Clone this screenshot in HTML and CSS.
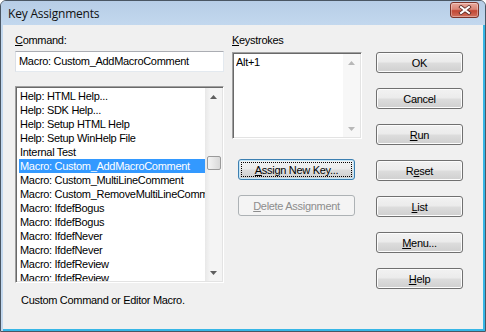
FILE: index.html
```html
<!DOCTYPE html>
<html lang="en">
<head>
    <meta charset="UTF-8">
    <title>Key Assignments</title>
    <link rel="stylesheet" href="styles.css">
</head>
<body>

    <div class="window">
        <div class="titlebar">
            <span class="title">Key Assignments</span>
            <button class="close-btn" aria-label="Close">
                <svg width="14" height="10" viewBox="0 0 14 10">
                    <path d="M3 2 L11 8 M11 2 L3 8" stroke="#5a2a24" stroke-width="3.6" stroke-linecap="square"/>
                    <path d="M3 2 L11 8 M11 2 L3 8" stroke="#fff" stroke-width="2" stroke-linecap="square"/>
                </svg>
            </button>
        </div>

        <div class="client">
            <div class="col col-cmd">
                <div class="lbl"><u>C</u>ommand:</div>
                <div class="edit">Macro: Custom_AddMacroComment</div>

                <div class="listbox cmd-list">
                    <ul class="items">
                        <li>Help: HTML Help...</li>
                        <li>Help: SDK Help...</li>
                        <li>Help: Setup HTML Help</li>
                        <li>Help: Setup WinHelp File</li>
                        <li>Internal Test</li>
                        <li class="selected">Macro: Custom_AddMacroComment</li>
                        <li>Macro: Custom_MultiLineComment</li>
                        <li>Macro: Custom_RemoveMultiLineComment</li>
                        <li>Macro: IfdefBogus</li>
                        <li>Macro: IfdefBogus</li>
                        <li>Macro: IfdefNever</li>
                        <li>Macro: IfdefNever</li>
                        <li>Macro: IfdefReview</li>
                        <li>Macro: IfdefReview</li>
                    </ul>
                    <div class="vscroll">
                        <div class="arrow"><svg width="7" height="4" viewBox="0 0 7 4"><path d="M0 4 L3.5 0 L7 4Z"/></svg></div>
                        <div class="track"><div class="thumb"></div></div>
                        <div class="arrow"><svg width="7" height="4" viewBox="0 0 7 4"><path d="M0 0 L3.5 4 L7 0Z"/></svg></div>
                    </div>
                </div>

                <p class="desc">Custom Command or Editor Macro.</p>
            </div>

            <div class="col col-keys">
                <div class="lbl"><u>K</u>eystrokes</div>
                <div class="listbox keys-list">
                    <ul class="items">
                        <li>Alt+1</li>
                    </ul>
                    <div class="vscroll disabled">
                        <div class="arrow"><svg width="7" height="4" viewBox="0 0 7 4"><path d="M0 4 L3.5 0 L7 4Z"/></svg></div>
                        <div class="track"></div>
                        <div class="arrow"><svg width="7" height="4" viewBox="0 0 7 4"><path d="M0 0 L3.5 4 L7 0Z"/></svg></div>
                    </div>
                </div>
                <button class="btn btn-wide btn-focus"><span class="focus-ring"><u>A</u>ssign New Key...</span></button>
                <button class="btn btn-wide" disabled><u>D</u>elete Assignment</button>
            </div>

            <div class="col col-btns">
                <button class="btn">OK</button>
                <button class="btn">Cancel</button>
                <button class="btn"><u>R</u>un</button>
                <button class="btn">R<u>e</u>set</button>
                <button class="btn"><u>L</u>ist</button>
                <button class="btn"><u>M</u>enu...</button>
                <button class="btn"><u>H</u>elp</button>
            </div>
        </div>
    </div>

</body>
</html>
```

FILE: styles.css
```css
:root {
    --face: #f0f0f0;
    --frame-dark: #4a5663;
    --frame-blue: #c3d8ee;
    --frame-cyan: #36b6e6;
    --select: #3399ff;
}

* {
    margin: 0;
    padding: 0;
    box-sizing: border-box;
}

body {
    width: 486px;
    height: 332px;
    overflow: hidden;
    background: #fff;
    font-family: "Liberation Sans", Arial, sans-serif;
    font-size: 11px;
    letter-spacing: -0.3px;
    color: #000;
}

u {
    text-decoration: underline;
    text-underline-offset: 1px;
}

.window {
    width: 486px;
    height: 332px;
    display: flex;
    flex-direction: column;
    border: 1px solid var(--frame-dark);
    border-top-left-radius: 6px;
    border-top-right-radius: 6px;
    background: var(--frame-blue);
    overflow: hidden;
}

/* title bar */
.titlebar {
    height: 24px;
    display: flex;
    align-items: center;
    padding: 1px 6px 0 7px;
    background: linear-gradient(#b7cde6, #c3d8ee);
}

.title {
    font-family: "Open Sans", "Noto Sans", sans-serif;
    font-size: 12px;
    letter-spacing: -0.2px;
    color: #111;
}

.close-btn {
    margin-left: auto;
    margin-top: -7px;
    width: 29px;
    height: 16px;
    display: flex;
    align-items: center;
    justify-content: center;
    border: 1px solid #7b3329;
    border-radius: 3px;
    background: linear-gradient(#e9a99d 0%, #d98576 45%, #c24734 55%, #d0705d 100%);
    box-shadow: inset 0 0 0 1px rgba(255, 255, 255, 0.35);
}

/* client area */
.client {
    flex: 1;
    display: flex;
    margin: 0 2px 2px 2px;
    padding: 9px 0 0 12px;
    background: var(--face);
    box-shadow: 2px 0 0 var(--frame-cyan), 0 2px 0 var(--frame-cyan), 2px 2px 0 var(--frame-cyan);
}

.col {
    display: flex;
    flex-direction: column;
}

.col-cmd {
    width: 209px;
}

.col-keys {
    width: 130px;
    margin-left: 8px;
}

.col-btns {
    width: 87px;
    margin-left: 14px;
    padding-top: 18px;
    gap: 15px;
}

.lbl {
    height: 13px;
    line-height: 13px;
}

/* edit */
.edit {
    margin-top: 4px;
    height: 21px;
    line-height: 19px;
    padding-left: 3px;
    background: #fff;
    border: 1px solid;
    border-color: #abadb3 #e3e9ef #e3e9ef #dbdfe6;
}

/* list boxes */
.listbox {
    display: flex;
    background: #fff;
    border: 1px solid;
    border-color: #a0a0a0 #fff #fff #a0a0a0;
    box-shadow: inset 1px 1px 0 #696969, inset -1px -1px 0 #e3e3e3;
    padding: 1px;
    overflow: hidden;
}

.cmd-list {
    margin-top: 14px;
    height: 197px;
}

.keys-list {
    margin-top: 5px;
    height: 87px;
}

.items {
    flex: 1;
    list-style: none;
    padding: 1px 0 0 2px;
    overflow: hidden;
}

.items li {
    height: 14px;
    line-height: 14px;
    padding-left: 1px;
    white-space: nowrap;
    overflow: hidden;
}

.items li.selected {
    background: var(--select);
    color: #fff;
}

.keys-list .items li {
    padding-left: 0;
}

/* scroll bar */
.vscroll {
    width: 17px;
    display: flex;
    flex-direction: column;
    background: linear-gradient(to right, #e8e8e8, #f4f4f4 30%, #f4f4f4);
}

.vscroll .arrow {
    height: 17px;
    display: flex;
    align-items: center;
    justify-content: center;
}

.vscroll .arrow svg {
    fill: #5e5e5e;
}

.vscroll.disabled {
    background: #f7f7f7;
}

.vscroll.disabled .arrow svg {
    fill: #b8b8b8;
}

.track {
    flex: 1;
}

.thumb {
    margin: 51px 1px 0 2px;
    height: 14px;
    border: 1px solid #9a9a9a;
    border-radius: 2px;
    background: linear-gradient(to right, #f4f4f4, #e6e6e6 50%, #d8d8d8);
}

.desc {
    margin-top: 11px;
    padding-left: 6px;
    line-height: 13px;
}

/* buttons */
.btn {
    height: 21px;
    font-family: "Liberation Sans", Arial, sans-serif;
    font-size: 11px;
    letter-spacing: -0.3px;
    color: #000;
    border: 1px solid #707070;
    border-radius: 3px;
    background: linear-gradient(#f2f2f2 0%, #ebebeb 48%, #dddddd 52%, #cfcfcf 100%);
    box-shadow: inset 0 0 0 1px #fcfcfc;
}

.btn-wide {
    width: 117px;
    margin-left: 6px;
}

.btn-focus {
    margin-top: 20px;
    border-color: #3c7fb1;
    box-shadow: inset 0 0 0 1px #c5e6f7;
    display: flex;
    align-items: center;
    justify-content: center;
    padding: 2px;
}

.focus-ring {
    flex: 1;
    align-self: stretch;
    display: flex;
    align-items: center;
    justify-content: center;
    border: 1px dotted #000;
}

.btn:disabled {
    margin-top: 15px;
    color: #8d8d8d;
    border-color: #adb2b5;
    background: #f4f4f4;
    box-shadow: none;
}
```
